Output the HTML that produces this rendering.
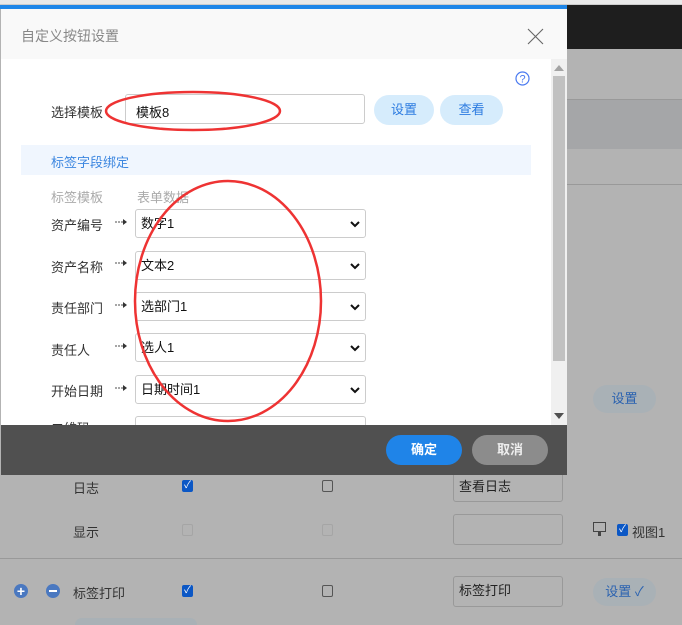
<!DOCTYPE html><html><head><meta charset="utf-8"><style>
*{box-sizing:border-box;margin:0;padding:0}
html,body{width:682px;height:625px;overflow:hidden}
body{background:#b3b3b3;font-family:"Liberation Sans","Noto Sans CJK SC",sans-serif;font-size:13px;position:relative;color:#333}
.a{position:absolute}
.sel{position:absolute;left:135px;width:231px;height:29px;border:1px solid #ccc;border-radius:3px;background:#fff;padding:0 5px;line-height:27px;font-size:13px;color:#111}
.sel svg{position:absolute;right:5px;top:11px}
.lb{position:absolute;left:51px;font-size:13px;color:#333}
.cb{position:absolute;width:11px;height:12px;border:1px solid #555;border-radius:2px;color:#fff;font-size:10px;line-height:10px;text-align:center}
.cbc{background:#0b57c5;border-color:#0b57c5}
.inp{position:absolute;left:453px;width:110px;border:1px solid #999;border-radius:3px;padding:0 5px;line-height:28px;font-size:13px;color:#222}
</style></head><body>
<div class="a" style="left:0;top:0;width:682px;height:5px;background:#e9e9e9;border-bottom:1px solid #ccc"></div>
<div class="a" style="left:567px;top:5px;width:115px;height:44px;background:#1e1e1e"></div>
<div class="a" style="left:567px;top:99px;width:115px;height:50px;background:#a5a6a8;border-top:1px solid #999"></div>
<div class="a" style="left:567px;top:184px;width:115px;height:1px;background:#999"></div>
<div class="a" style="left:593px;top:385px;width:63px;height:28px;border-radius:14px;background:#a9b1b6;color:#2a62b0;text-align:center;line-height:28px">设置</div>
<div class="a" style="left:73px;top:478px">日志</div>
<div class="cb cbc" style="left:182px;top:480px">✓</div>
<div class="cb" style="left:322px;top:480px"></div>
<div class="inp" style="top:472px;height:30px">查看日志</div>
<div class="a" style="left:73px;top:522px">显示</div>
<div class="cb" style="left:182px;top:524px;border-color:#a5a5a5"></div>
<div class="cb" style="left:322px;top:524px;border-color:#a5a5a5"></div>
<div class="inp" style="top:514px;height:31px"></div>
<div class="a" style="left:593px;top:522px;width:13px;height:10px;border:1.5px solid #444"></div>
<div class="a" style="left:598px;top:532px;width:3px;height:4px;background:#444"></div>
<div class="cb cbc" style="left:617px;top:524px">✓</div>
<div class="a" style="left:632px;top:522px">视图1</div>
<div class="a" style="left:0;top:558px;width:682px;height:1px;background:#999"></div>
<div class="a" style="left:14px;top:584px;width:14px;height:14px;border-radius:50%;background:#4a78c0;color:#fff;text-align:center;line-height:14px;font-size:14px;font-weight:bold">+</div>
<div class="a" style="left:46px;top:584px;width:14px;height:14px;border-radius:50%;background:#4a78c0"><div style="margin:6px 3px;height:2px;background:#fff"></div></div>
<div class="a" style="left:73px;top:583px">标签打印</div>
<div class="cb cbc" style="left:182px;top:585px">✓</div>
<div class="cb" style="left:322px;top:585px"></div>
<div class="inp" style="top:576px;height:31px">标签打印</div>
<div class="a" style="left:593px;top:578px;width:63px;height:28px;border-radius:14px;background:#a9b1b6;color:#2a62b0;text-align:center;line-height:28px">设置 ✓</div>
<div class="a" style="left:75px;top:618px;width:122px;height:7px;border-radius:10px 10px 0 0;background:#a9b1b6"></div>
<div class="a" style="left:0;top:5px;width:567px;height:4px;background:#1e86e8"></div>
<div class="a" style="left:1px;top:9px;width:566px;height:50px;background:#f9f9f9"></div>
<div class="a" style="left:21px;top:26px;font-size:14px;color:#888">自定义按钮设置</div>
<svg class="a" style="left:527px;top:28px" width="17" height="17"><path d="M1 1L16 16M16 1L1 16" stroke="#666" stroke-width="1.1"/></svg>
<div class="a" style="left:1px;top:59px;width:566px;height:366px;background:#fff"></div>
<div class="a" style="left:551px;top:59px;width:16px;height:366px;background:#f0f0f0"></div>
<div class="a" style="left:553px;top:76px;width:12px;height:285px;background:#c1c1c1"></div>
<svg class="a" style="left:554px;top:65px" width="10" height="6"><path d="M0 6L5 0L10 6Z" fill="#a3a3a3"/></svg>
<svg class="a" style="left:554px;top:413px" width="10" height="6"><path d="M0 0L5 6L10 0Z" fill="#505050"/></svg>
<svg class="a" style="left:515px;top:71px" width="15" height="15"><circle cx="7.5" cy="7.5" r="6.5" fill="none" stroke="#4a7af0" stroke-width="1.2"/><text x="7.5" y="11.5" font-size="11" text-anchor="middle" fill="#4a7af0" font-family="Liberation Sans">?</text></svg>
<div class="a" style="left:51px;top:102px">选择模板</div>
<div class="a" style="left:125px;top:94px;width:240px;height:30px;border:1px solid #ccc;border-radius:3px;background:#fff"></div>
<div class="a" style="left:136px;top:102px;color:#111">模板8</div>
<div class="a" style="left:374px;top:95px;width:60px;height:30px;border-radius:15px;background:#d6ecfc;color:#2c7be0;text-align:center;line-height:30px">设置</div>
<div class="a" style="left:440px;top:95px;width:63px;height:30px;border-radius:15px;background:#d6ecfc;color:#2c7be0;text-align:center;line-height:30px">查看</div>
<div class="a" style="left:21px;top:145px;width:510px;height:30px;background:#f0f6fe;color:#3d87e0;padding:7px 0 0 30px">标签字段绑定</div>
<div class="a" style="left:51px;top:187px;color:#aaa">标签模板</div>
<div class="a" style="left:137px;top:187px;color:#aaa">表单数据</div>
<div class="lb" style="top:215px">资产编号</div><div class="sel" style="top:209px">数字1<svg width="10" height="7"><path d="M1 1L5 5L9 1" stroke="#111" stroke-width="2" fill="none"/></svg></div>
<div class="lb" style="top:257px">资产名称</div><div class="sel" style="top:251px">文本2<svg width="10" height="7"><path d="M1 1L5 5L9 1" stroke="#111" stroke-width="2" fill="none"/></svg></div>
<div class="lb" style="top:298px">责任部门</div><div class="sel" style="top:292px">选部门1<svg width="10" height="7"><path d="M1 1L5 5L9 1" stroke="#111" stroke-width="2" fill="none"/></svg></div>
<div class="lb" style="top:340px">责任人</div><div class="sel" style="top:333px">选人1<svg width="10" height="7"><path d="M1 1L5 5L9 1" stroke="#111" stroke-width="2" fill="none"/></svg></div>
<div class="lb" style="top:381px">开始日期</div><div class="sel" style="top:375px">日期时间1<svg width="10" height="7"><path d="M1 1L5 5L9 1" stroke="#111" stroke-width="2" fill="none"/></svg></div>
<div class="lb" style="top:418px;height:7px;overflow:hidden">二维码</div><div class="sel" style="top:416px;height:9px;border-bottom:none;border-radius:3px 3px 0 0"></div>
<svg class="a" style="left:115px;top:217px" width="16" height="180"><g fill="#333"><g id="r"><path d="M0 5h9" stroke="#888" stroke-width="1.5" stroke-dasharray="2 1"/><path d="M8 2L12 5L8 8Z"/></g><use href="#r" y="41"/><use href="#r" y="83"/><use href="#r" y="124"/><use href="#r" y="166"/></g></svg>
<svg class="a" style="left:0;top:59px" width="567" height="366"><ellipse cx="193" cy="52" rx="87" ry="19" fill="none" stroke="#ee3333" stroke-width="2.5"/><ellipse cx="228" cy="242" rx="93" ry="120" fill="none" stroke="#ee3333" stroke-width="2.5"/></svg>
<div class="a" style="left:1px;top:425px;width:566px;height:50px;background:#505050"></div>
<div class="a" style="left:386px;top:435px;width:76px;height:30px;border-radius:15px;background:#1f84e8;color:#fff;text-align:center;line-height:30px;font-weight:bold">确定</div>
<div class="a" style="left:472px;top:435px;width:76px;height:30px;border-radius:15px;background:#8c8c8c;color:#eee;text-align:center;line-height:30px;font-weight:bold">取消</div>
</body></html>
